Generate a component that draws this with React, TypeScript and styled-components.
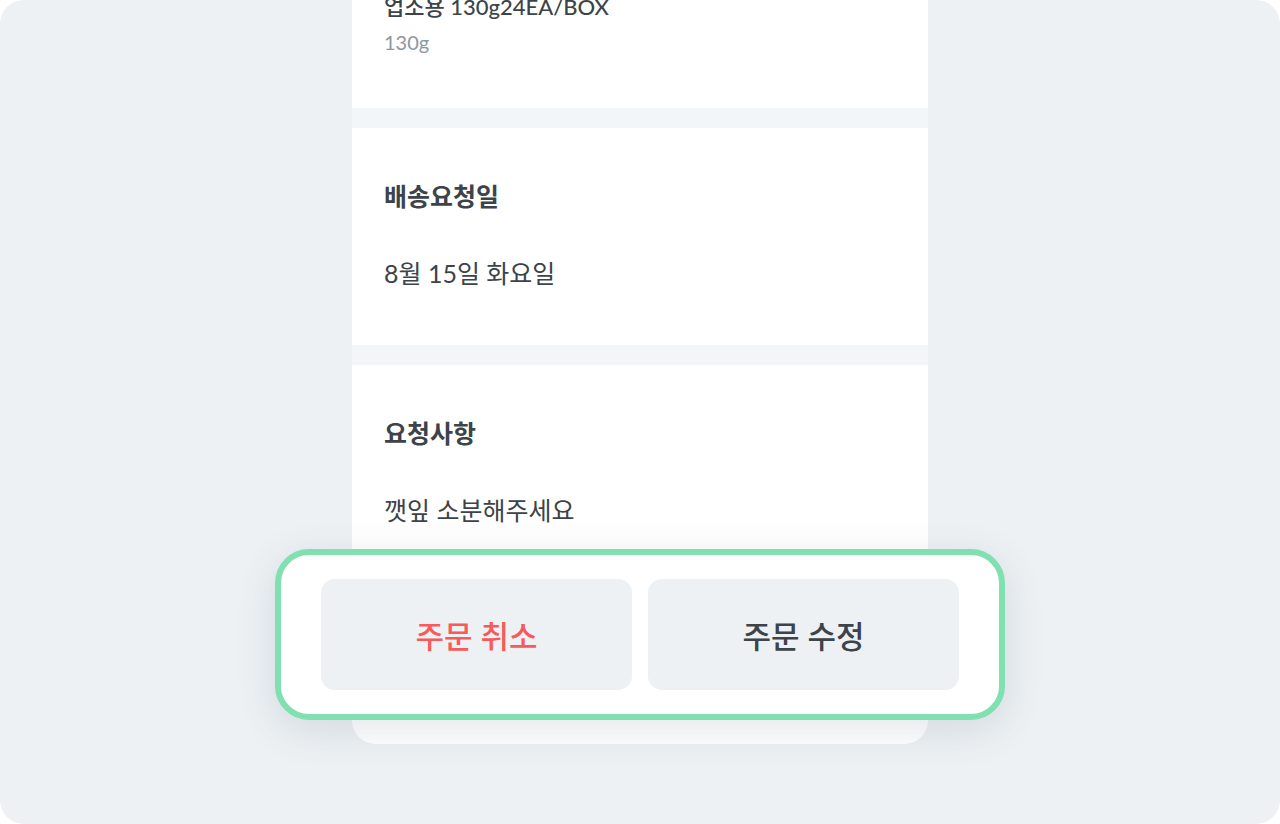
import React from "react";
import styled, { createGlobalStyle } from "styled-components";

const Global = createGlobalStyle`
  html, body { margin: 0; padding: 0; background: #ffffff; }
  body { font-family: Lato, "Noto Sans CJK KR", sans-serif; }
  * { box-sizing: border-box; }
`;

const Canvas = styled.div`
  position: relative;
  width: 1280px;
  height: 824px;
  border-radius: 24px;
  overflow: hidden;
  background: #edf1f4;
  display: flex;
  justify-content: center;
  align-items: flex-end;
  padding-bottom: 80px;
`;

const Phone = styled.div`
  width: 576px;
  display: flex;
  flex-direction: column;
  gap: 20px;
  background: #f3f6f9;
  border-radius: 0 0 24px 24px;
  overflow: hidden;
`;

const Section = styled.section<{ $grow?: boolean }>`
  background: #ffffff;
  padding: 52px 32px 56px;
  display: flex;
  flex-direction: column;
  gap: 45px;
  height: ${(p) => (p.$grow ? "379px" : "auto")};
`;

const ProductSection = styled.section`
  background: #ffffff;
  padding: 24px 32px 52px;
  display: flex;
  flex-direction: column;
`;

const ProductHead = styled.div`
  display: flex;
  justify-content: space-between;
  align-items: flex-end;
  font-size: 24px;
  line-height: 30px;
  color: #3c4349;
  font-weight: 700;
`;

const Price = styled.span`
  font-size: 22px;
  font-weight: 400;
  color: #8d98a2;
  padding-right: 16px;
`;

const ProductName = styled.div`
  font-size: 22px;
  line-height: 24px;
  font-weight: 500;
  color: #3c4349;
`;

const Spec = styled.div`
  font-size: 20px;
  line-height: 28px;
  color: #8d98a2;
  margin-top: 9px;
`;

const Title = styled.h3`
  margin: 0;
  font-size: 25px;
  line-height: 32px;
  font-weight: 700;
  color: #3c4349;
`;

const Body = styled.p`
  margin: 0;
  font-size: 25px;
  line-height: 32px;
  font-weight: 400;
  color: #3c4349;
`;

const ActionBar = styled.div`
  position: absolute;
  left: 50%;
  bottom: 104px;
  transform: translateX(-50%);
  width: 730px;
  height: 171px;
  background: #ffffff;
  border: 6px solid #80e0b0;
  border-radius: 34px;
  box-shadow: 0 10px 40px rgba(60, 80, 100, 0.14);
  padding: 24px 40px;
  display: grid;
  grid-template-columns: 1fr 1fr;
  gap: 16px;
`;

const ActionButton = styled.button<{ $danger?: boolean }>`
  border: none;
  border-radius: 14px;
  background: #edf1f4;
  font-family: Lato, "Noto Sans CJK KR", sans-serif;
  font-size: 31px;
  font-weight: 500;
  color: ${(p) => (p.$danger ? "#f85a5a" : "#3c4349")};
  cursor: pointer;
`;

export default function App() {
  return (
    <>
      <Global />
      <Canvas>
        <Phone>
          <ProductSection>
            <ProductHead>
              <span>국내산 깻잎</span>
              <Price>(1BOX)</Price>
            </ProductHead>
            <ProductName>업소용 130g24EA/BOX</ProductName>
            <Spec>130g</Spec>
          </ProductSection>
          <Section>
            <Title>배송요청일</Title>
            <Body>8월 15일 화요일</Body>
          </Section>
          <Section $grow>
            <Title>요청사항</Title>
            <Body>깻잎 소분해주세요</Body>
          </Section>
        </Phone>
        <ActionBar>
          <ActionButton $danger>주문 취소</ActionButton>
          <ActionButton>주문 수정</ActionButton>
        </ActionBar>
      </Canvas>
    </>
  );
}
